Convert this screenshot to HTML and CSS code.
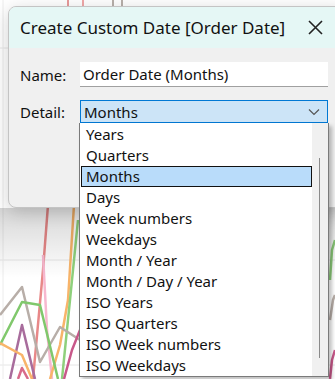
FILE: index.html
```html
<!DOCTYPE html>
<html lang="en">
  <head>
    <link rel="stylesheet" href="styles.css">
  </head>
  <body>
    <!-- chart behind the dialog -->
    <svg class="chart" width="335" height="379" viewBox="0 0 335 379">
      <line x1="0" y1="48" x2="335" y2="48" stroke="#e6e6e6" />
      <line x1="0" y1="260" x2="335" y2="260" stroke="#e6e6e6" />
      <line x1="0" y1="365" x2="335" y2="365" stroke="#e6e6e6" />
      <line x1="3" y1="0" x2="3" y2="379" stroke="#ececec" />
      <line x1="68" y1="0" x2="68" y2="10" stroke="#e89a9a" stroke-width="2" />
      <line x1="83" y1="0" x2="83" y2="10" stroke="#f0a8a8" stroke-width="2" />
      <line x1="113" y1="0" x2="113" y2="10" stroke="#b8b0ab" stroke-width="2" />
      <line x1="122" y1="0" x2="122" y2="10" stroke="#b8b0ab" stroke-width="2" />
      <g fill="none" stroke-width="2.5" stroke-linejoin="round">
        <polyline points="48,205 43,270 33,379" stroke="#e88888" />
        <polyline points="43,255 47,330 52,379" stroke="#f7b8cf" />
        <polyline points="74,205 68,300 60,345 50,379" stroke="#f8b46a" />
        <polyline points="78,220 70,300 62,379" stroke="#8fd07c" />
        <polyline points="0,315 22,287 40,362 60,327 80,340" stroke="#b8aea8" />
        <polyline points="0,345 22,302 40,305 58,379" stroke="#80c86c" />
        <polyline points="10,379 22,325 35,379" stroke="#a86c9c" />
        <polyline points="0,343 22,355 32,379" stroke="#f8b46a" />
        <polyline points="18,379 22,368 28,379" stroke="#d86a8a" />
        <polyline points="64,379 72,350 80,330" stroke="#c8588a" />
        <polyline points="330,280 332,250 335,240" stroke="#8fd07c" />
        <polyline points="330,320 333,300 335,295" stroke="#b8aea8" />
        <polyline points="330,379 332,360 335,350" stroke="#c8588a" />
      </g>
      <rect x="0" y="208" width="335" height="70" fill="url(#shade)" />
      <defs>
        <linearGradient id="shade" x1="0" y1="0" x2="0" y2="1">
          <stop offset="0" stop-color="#000" stop-opacity="0.16" />
          <stop offset="1" stop-color="#000" stop-opacity="0" />
        </linearGradient>
      </defs>
    </svg>

    <div class="dialog">
      <div class="dialog-head">
        <span class="dialog-title">Create Custom Date [Order Date]</span>
        <svg class="close" width="15" height="15" viewBox="0 0 15 15">
          <path d="M1 1 L14 14 M14 1 L1 14" stroke="#222" stroke-width="1.6" fill="none" />
        </svg>
      </div>
      <div class="dialog-body">
        <div class="row">
          <span class="label">Name:</span>
          <div class="field name-field">Order Date (Months)</div>
        </div>
        <div class="row">
          <span class="label">Detail:</span>
          <div class="field select-field">
            <span>Months</span>
            <svg width="12" height="8" viewBox="0 0 12 8">
              <path d="M1 1.5 L6 6.5 L11 1.5" stroke="#555" stroke-width="1.2" fill="none" />
            </svg>
          </div>
        </div>
      </div>
    </div>

    <div class="dropdown">
      <ul class="options">
        <li>Years</li>
        <li>Quarters</li>
        <li class="selected">Months</li>
        <li>Days</li>
        <li>Week numbers</li>
        <li>Weekdays</li>
        <li>Month / Year</li>
        <li>Month / Day / Year</li>
        <li>ISO Years</li>
        <li>ISO Quarters</li>
        <li>ISO Week numbers</li>
        <li>ISO Weekdays</li>
      </ul>
      <div class="scrollbar"><div class="thumb"></div></div>
    </div>
  </body>
</html>
```

FILE: styles.css
```css
body {
  margin: 0;
  width: 335px;
  height: 379px;
  overflow: hidden;
  position: relative;
  background: #fff;
  font-family: "Noto Sans", "Open Sans", sans-serif;
  color: #111;
}

.chart {
  position: absolute;
  left: 0;
  top: 0;
}

.dialog {
  position: absolute;
  left: 8px;
  top: 6px;
  width: 340px;
  height: 202px;
  background: #f0f0f0;
  border: 1px solid #c4c4c4;
  border-radius: 8px;
  overflow: hidden;
  box-shadow: 0 4px 18px rgba(0, 0, 0, 0.18);
  box-sizing: border-box;
}

.dialog-head {
  height: 41px;
  background: #e5f7f5;
  display: flex;
  align-items: center;
  padding-left: 11px;
}

.dialog-title {
  font-size: 17px;
  flex: 1;
  padding-bottom: 1px;
}

.close {
  margin-right: 24px;
}

.dialog-body {
  padding: 14px 0 0 11px;
  display: flex;
  flex-direction: column;
  gap: 13px;
}

.row {
  display: flex;
  align-items: center;
}

.label {
  width: 60px;
  font-size: 15px;
}

.field {
  width: 248px;
  box-sizing: border-box;
  font-size: 15px;
  display: flex;
  align-items: center;
  padding-left: 3px;
}

.name-field {
  height: 25px;
  background: #fff;
  border-bottom: 1px solid #a0a0a0;
}

.select-field {
  height: 23px;
  background: #cce4f7;
  border: 1px solid #0078d4;
  justify-content: space-between;
  padding-right: 7px;
}

.dropdown {
  position: absolute;
  left: 79px;
  top: 123px;
  width: 250px;
  height: 254px;
  background: #fff;
  border: 1px solid #7a7a7a;
  border-top: none;
  box-sizing: border-box;
  display: flex;
  box-shadow: 3px 3px 4px rgba(0, 0, 0, 0.25);
}

.options {
  list-style: none;
  margin: 0;
  padding: 1px 0 0 1px;
  flex: 1;
}

.options li {
  height: 21px;
  line-height: 21px;
  font-size: 15px;
  padding-left: 5px;
  box-sizing: border-box;
}

.options li.selected {
  background: #b9dcfa;
  border: 1px solid #111;
  padding-left: 4px;
  line-height: 19px;
}

.scrollbar {
  width: 16px;
  background: #f0f0f0;
  position: relative;
}

.thumb {
  position: absolute;
  left: 7px;
  top: 35px;
  width: 1px;
  height: 200px;
  background: #8a8a8a;
}
```
